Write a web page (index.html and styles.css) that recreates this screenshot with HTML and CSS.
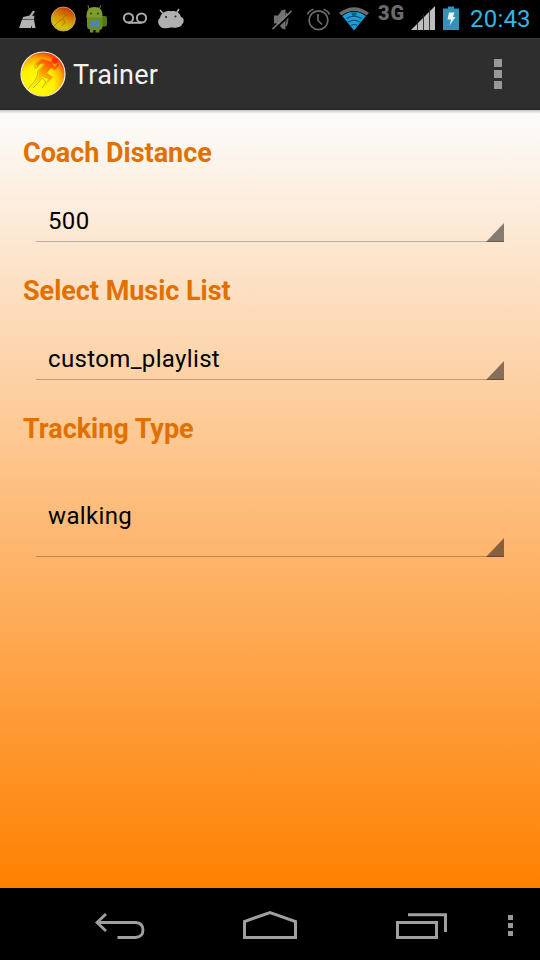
FILE: index.html
```
<!DOCTYPE html>
<html lang="en">
<head>
    <meta charset="UTF-8">
    <meta name="viewport" content="width=device-width, initial-scale=1.0">
    <title>Trainer</title>
    <link rel="stylesheet" href="styles.css">
</head>
<body>
    <!-- Status bar -->
    <div class="status-bar">
        <svg class="icon" width="30" height="38" viewBox="15 0 30 38">
            <path d="M33 10.500L35 11.500L32 16L34.500 15.500L34 19L22.500 19L23 17L29.500 15.500Z" fill="#aaa"/>
            <path d="M22 19.500H34L35.500 28H32L31 25V28H19C20.500 25 21 22 22 19.500Z" fill="#b4b4b4"/>
        </svg>
        <svg class="icon" width="36" height="38" viewBox="45 0 36 38">
            <defs>
                <linearGradient id="ball-dim" x1="0.75" y1="0" x2="0.35" y2="1">
                    <stop offset="0" stop-color="#d02800"/>
                    <stop offset="0.45" stop-color="#d58a00"/>
                    <stop offset="0.8" stop-color="#d6c000"/>
                    <stop offset="1" stop-color="#d0b800"/>
                </linearGradient>
            </defs>
            <circle cx="63.300" cy="19" r="12" fill="url(#ball-dim)" stroke="#b8a898" stroke-width="0.900"/>
            <path d="M59 16L62 12.500L66 14L62.500 19L65 22L62 26M62 19L58 22L54 26M66 15L69 16" fill="none" stroke="#a66a00" stroke-width="1" opacity="0.7"/>
        </svg>
        <svg class="icon" width="36" height="38" viewBox="81 0 36 38">
            <path d="M89 9L88 5.500M99 9L101 5.500" stroke="#617a20" stroke-width="1.200"/>
            <rect x="98" y="16" width="9" height="10.500" rx="2" fill="#587515"/>
            <path d="M86.500 18C86 10 89 7 94.500 7S103 10 102.500 18Z" fill="#7f9d2a"/>
            <path d="M87 17.500H102.500V27Q102 30 99.500 30V32.500H95.500V30H93.500V32.500H90V29.500Q87 29 87 26Z" fill="#6c8c20"/>
            <circle cx="91" cy="13.500" r="0.900" fill="#26300c"/>
            <circle cx="98" cy="13.500" r="0.900" fill="#26300c"/>
            <path d="M89.500 19.500L94.500 21.500L99.500 19L98.500 23.500L100 27.500L94.500 26L89.500 27.500L91 23.500Z" fill="#4c83bd"/>
        </svg>
        <svg class="icon" width="36" height="38" viewBox="117 0 36 38">
            <g fill="none" stroke="#aaa" stroke-width="2">
                <circle cx="128.500" cy="18" r="4.600"/>
                <circle cx="141.500" cy="18" r="4.600"/>
                <path d="M128 22.800H142"/>
            </g>
        </svg>
        <svg class="icon" width="36" height="38" viewBox="153 0 36 38">
            <path d="M163.500 14L160 10M176.500 13L179 9" stroke="#b0b0b0" stroke-width="1.500"/>
            <path d="M160 18C161 12.500 166 10.500 171 11.200C176 10.500 180 13 181 17C184.500 18 184.500 22 182 24.500C181 27.500 176 28 171 27.500C166 29 161 28.500 159.500 25.500C157.500 23 158 19 160 18Z" fill="#b0b0b0"/>
            <circle cx="166" cy="17" r="1" fill="#222"/>
            <circle cx="175.500" cy="16.500" r="1" fill="#222"/>
        </svg>

        <div class="status-right">
            <svg class="icon" width="34" height="38" viewBox="266 0 34 38">
                <path d="M274 15.500H278L282 10L285.500 9.500V29.500L282 28.500L278 23.500H274Z" fill="#707070"/>
                <path d="M286 13Q289 19 286 26" fill="none" stroke="#686868" stroke-width="1.800"/>
                <path d="M274 30L292.500 12.500" stroke="#000" stroke-width="1.800"/>
                <path d="M272.500 29L291.500 11" stroke="#808080" stroke-width="1.600"/>
            </svg>
            <svg class="icon" width="36" height="38" viewBox="300 0 36 38">
                <g fill="none" stroke="#6c6c6c" stroke-width="1.700">
                    <circle cx="318.500" cy="20.200" r="9.400"/>
                    <path d="M307.500 14.500Q309 10.500 313.500 9.200M323.500 9.200Q328 10.500 329.500 14.500M318 14V20.500L322 24.500"/>
                </g>
            </svg>
            <svg class="icon" width="37" height="38" viewBox="336 0 37 38">
                <path d="M339 12.800Q354 1.500 369 12.800L366.500 15.500Q354 6.500 341.500 15.500Z" fill="#6b6b6b"/>
                <path d="M342.200 16Q354 7.500 365.800 16L354 30.500Z" fill="#1b9ed8"/>
                <path d="M346.500 18.500Q354 14 361.500 18.500M348 22Q354 18.500 360 22M351 25.500Q354 23.500 357 25.500" fill="none" stroke="#074766" stroke-width="1.100"/>
                <path d="M351 12.500H357L355.500 16H352.500Z" fill="#0b5e84"/>
            </svg>
            <span class="network">3G</span>
            <svg class="icon" width="30" height="38" viewBox="408 0 30 38">
                <path d="M411 30L435 6V30Z" fill="#bebebe"/>
                <path d="M417.500 20V31M423.500 14V31M429.500 8V31" stroke="#222" stroke-width="0.900"/>
            </svg>
            <svg class="icon" width="30" height="38" viewBox="438 0 30 38">
                <path d="M448 6.500H454V8.500H459V30H443V8.500H448Z" fill="#3492b8"/>
                <path d="M449 12.500H454.500L453 17H455.500L449.500 25.500L451 19.500H447.500Z" fill="#e8f4f8"/>
            </svg>
            <span class="clock">20:43</span>
        </div>
    </div>

    <!-- Action bar -->
    <div class="action-bar">
        <svg class="logo" width="46" height="46" viewBox="0 0 46 46">
            <defs>
                <radialGradient id="ball" cx="0.36" cy="0.72" r="0.78">
                    <stop offset="0" stop-color="#ffff00"/>
                    <stop offset="0.5" stop-color="#fff000"/>
                    <stop offset="0.75" stop-color="#ffa800"/>
                    <stop offset="1" stop-color="#ff1800"/>
                </radialGradient>
                <linearGradient id="runner" x1="0.9" y1="0" x2="0.3" y2="0.9">
                    <stop offset="0" stop-color="#ff2800"/>
                    <stop offset="0.400" stop-color="#ff7800"/>
                    <stop offset="0.750" stop-color="#ffc400"/>
                    <stop offset="1" stop-color="#f4ec00"/>
                </linearGradient>
            </defs>
            <circle cx="23" cy="23" r="22" fill="url(#ball)" stroke="#f4eee0" stroke-width="1.200"/>
            <path d="M28 10L21 8L15 13L15 17L17 17L20 12L24 13L18 20L17 26L14 31L8 38M13 37L19 31L22 27L26 31L22 37" fill="none" stroke="#b4a000" stroke-width="1" opacity="0.8"/>
            <path d="M32 11L22 8L16 13L17 16L22 12L25 13L19 20L18 26L10 38L18 31L22 26L28 28L24 36L33 26L27 22L31 17L35 19L39 14L38 12L35 16L33 14Z" fill="url(#runner)"/>
            <circle cx="34.800" cy="9.800" r="3" fill="#ff2c00"/>
        </svg>
        <h1 class="title">Trainer</h1>
        <div class="overflow">
            <span></span>
            <span></span>
            <span></span>
        </div>
    </div>

    <!-- Settings -->
    <div class="content">
        <h2 class="label">Coach Distance</h2>
        <div class="spinner">500</div>
        <h2 class="label">Select Music List</h2>
        <div class="spinner">custom_playlist</div>
        <h2 class="label">Tracking Type</h2>
        <div class="spinner spinner-tall">walking</div>
    </div>

    <!-- Navigation bar -->
    <div class="nav-bar">
        <svg width="52" height="32" viewBox="94 910 52 32">
            <path d="M106 914L97 922.500L106 931M97 922.500H135.500Q143 923 143 930T135.500 937.500H117.500" fill="none" stroke="#a0a0a0" stroke-width="2.800"/>
        </svg>
        <svg width="58" height="32" viewBox="241 910 58 32">
            <path d="M244.500 937.500V921.500L270 912.500L295.500 921.500V937.500Z" fill="none" stroke="#a0a0a0" stroke-width="3"/>
        </svg>
        <svg width="54" height="32" viewBox="394 910 54 32">
            <path d="M397.500 922.500H436.500V937.500H397.500ZM408 914.800H445.500V932" fill="none" stroke="#a0a0a0" stroke-width="3"/>
        </svg>
        <div class="nav-menu">
            <span></span>
            <span></span>
            <span></span>
        </div>
    </div>
</body>
</html>
```
FILE: styles.css
```
* {
    box-sizing: border-box;
}
body {
    margin: 0;
    width: 540px;
    height: 960px;
    display: flex;
    flex-direction: column;
    overflow: hidden;
    font-family: Roboto, "Liberation Sans", sans-serif;
    background-color: #000;
}
svg {
    display: block;
    flex: none;
}

/* status bar */
.status-bar {
    display: flex;
    height: 38px;
    padding-left: 15px;
    background-color: #000;
}
.status-right {
    display: flex;
    margin-left: auto;
    width: 274px;
}
.network {
    width: 35px;
    padding-left: 5px;
    font-size: 20px;
    font-weight: 900;
    line-height: 27px;
    letter-spacing: 0.8px;
    color: #6b6b6b;
}
.clock {
    padding-left: 2px;
    font-size: 24px;
    line-height: 39px;
    letter-spacing: 0.2px;
    color: #33b5e5;
}

/* action bar */
.action-bar {
    display: flex;
    align-items: center;
    height: 72px;
    padding: 0 38px 0 20px;
    border-top: 1px solid #3a3a3a;
    border-bottom: 1px solid #232323;
    background-color: #2e2e2e;
}
.title {
    margin: 2px 0 0 7px;
    font-size: 27px;
    font-weight: normal;
    line-height: 32px;
    letter-spacing: 0.25px;
    color: #f3f3f3;
}
.overflow {
    display: flex;
    flex-direction: column;
    gap: 3px;
    margin-left: auto;
}
.overflow span {
    width: 8px;
    height: 8px;
    background-color: #999;
}

/* settings */
.content {
    height: 778px;
    padding: 23px 36px 0 23px;
    background: linear-gradient(#c8c8c8, rgba(235, 235, 235, 0)) top / 100% 4px no-repeat,
                linear-gradient(#fcfcfc, #ff8000);
}
.label {
    margin: 0;
    font-size: 27px;
    font-weight: bold;
    line-height: 40px;
    letter-spacing: -0.03px;
    color: #e07000;
}
.spinner {
    position: relative;
    height: 69px;
    margin: 0 0 29px 13px;
    padding: 28px 12px 0;
    border-bottom: 1px solid rgba(0, 0, 0, 0.25);
    font-size: 24px;
    line-height: 40px;
    letter-spacing: 0.35px;
    color: #000;
}
.spinner::after {
    content: "";
    position: absolute;
    right: 0;
    bottom: -1px;
    width: 18px;
    height: 19px;
    background-color: rgba(0, 0, 0, 0.47);
    clip-path: polygon(100% 0, 100% 100%, 0 100%);
}
.spinner-tall {
    height: 108px;
    padding-top: 47px;
}

/* navigation bar */
.nav-bar {
    display: flex;
    align-items: center;
    height: 72px;
    padding: 4px 27px 0 94px;
    background-color: #000;
}
.nav-bar svg + svg {
    margin-left: 95px;
}
.nav-menu {
    display: flex;
    flex-direction: column;
    gap: 3px;
    margin: -1px 0 0 auto;
}
.nav-menu span {
    width: 5px;
    height: 5px;
    background-color: #999;
}
```
